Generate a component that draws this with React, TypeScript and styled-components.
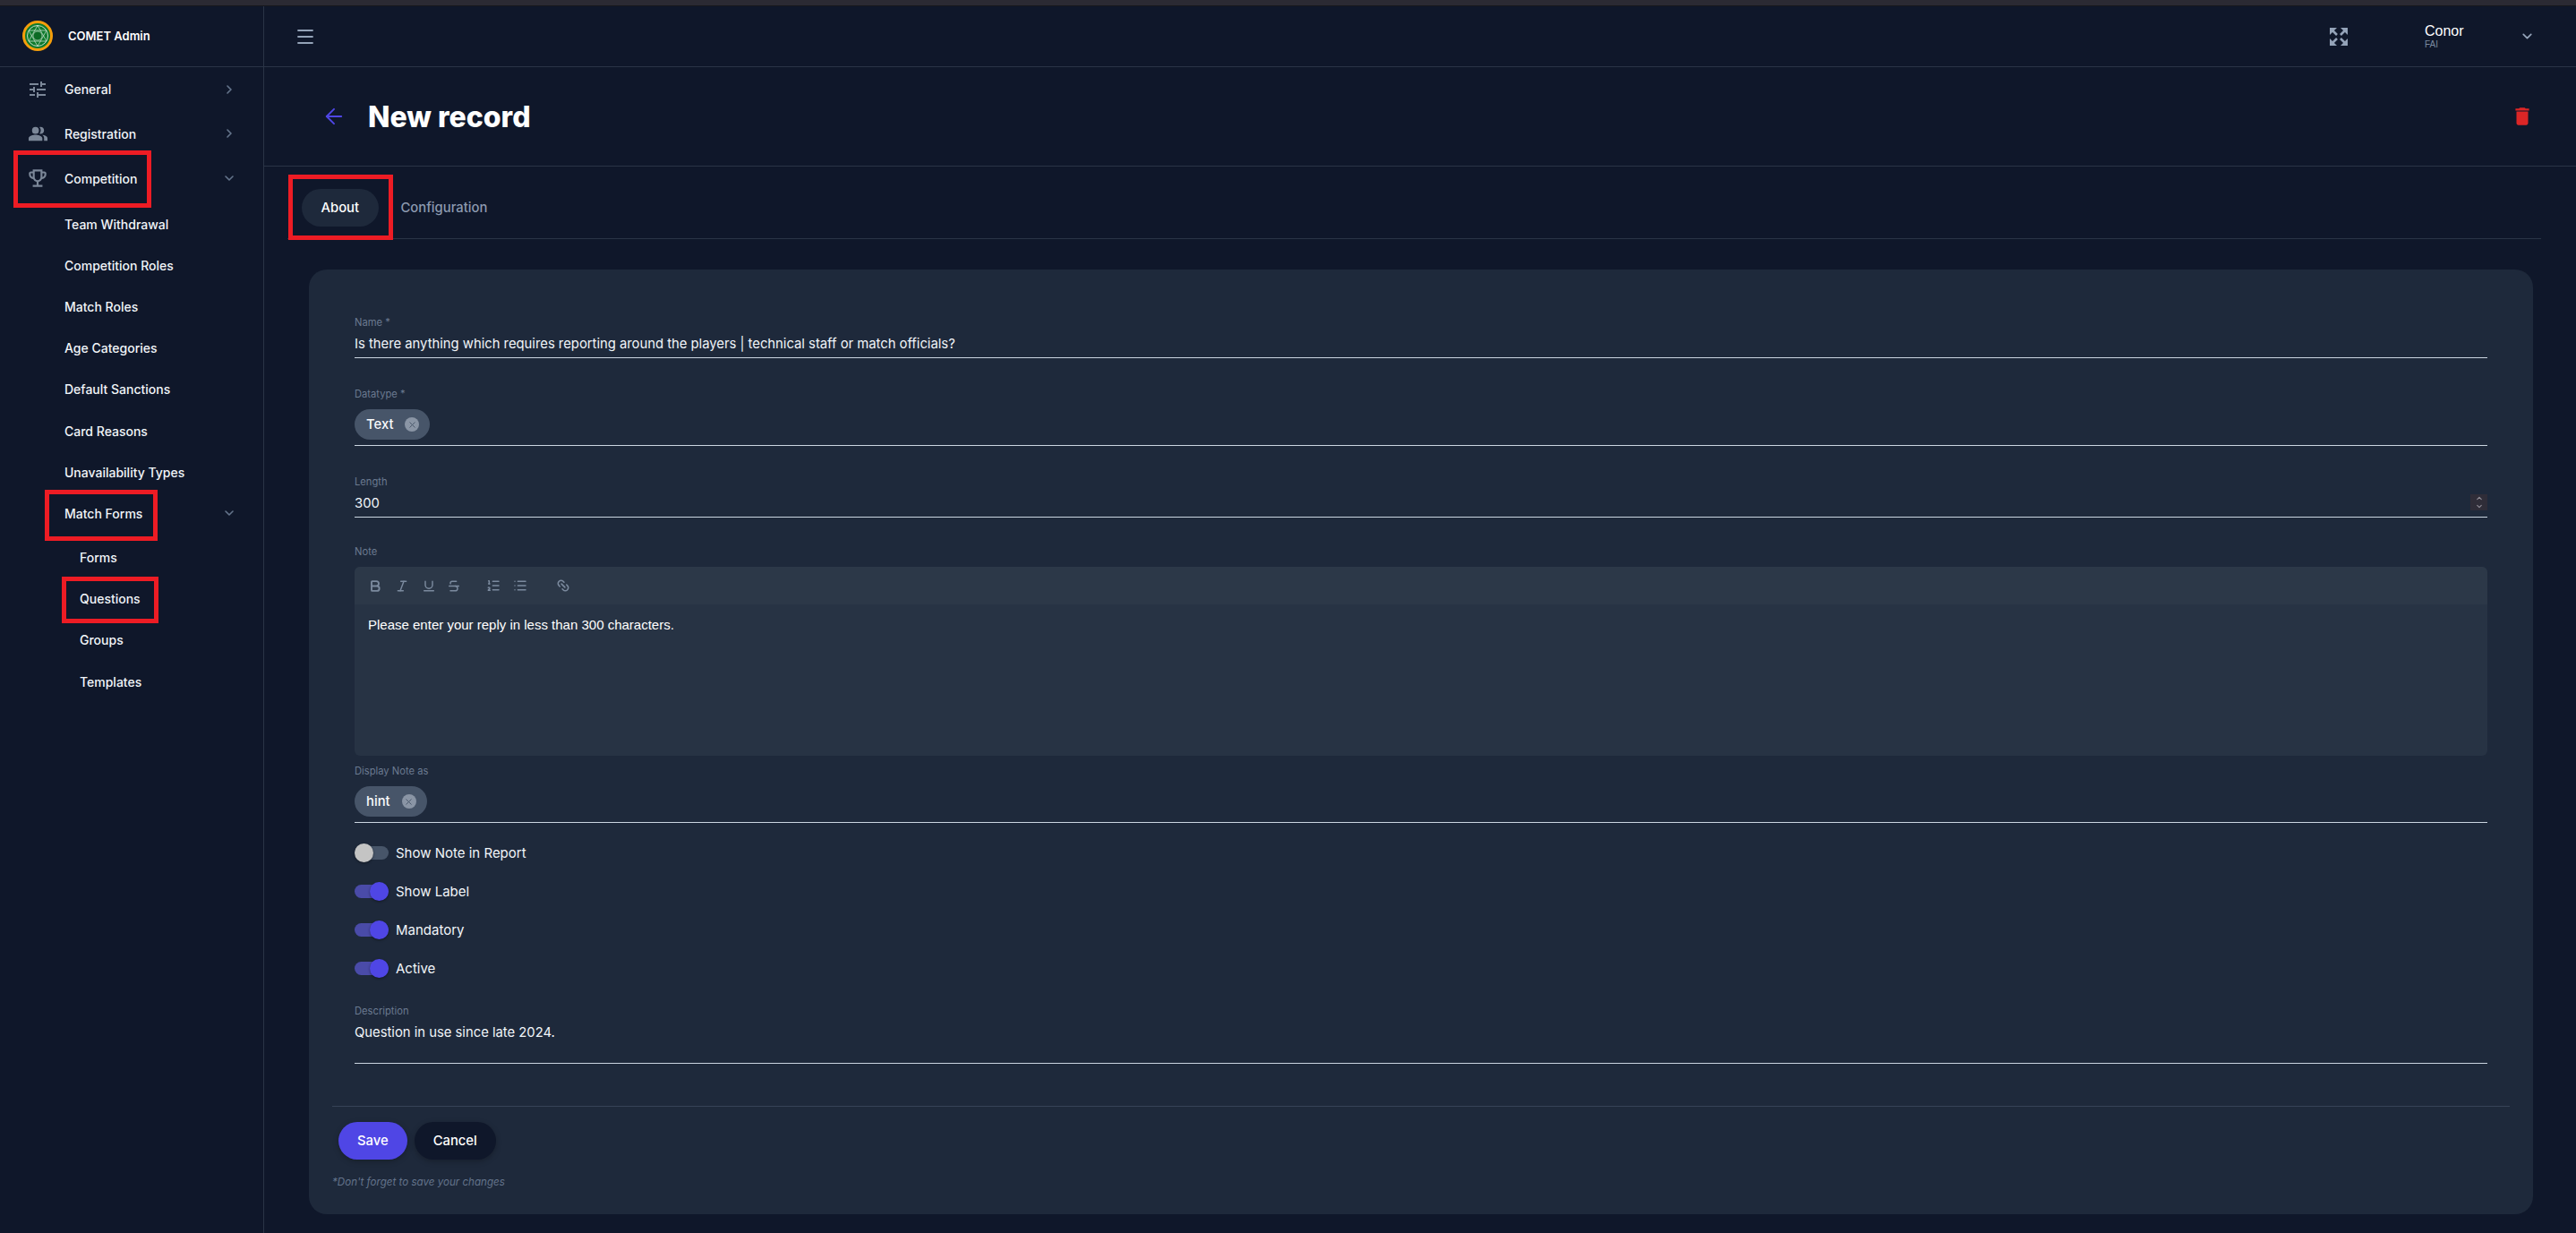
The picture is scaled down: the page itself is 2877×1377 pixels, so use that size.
import React from "react"
import styled, { createGlobalStyle } from "styled-components"
import { ChevronDown, ChevronRight, Menu, ArrowLeft, X, ChevronUp, Bold, Italic, Underline, Strikethrough, ListOrdered, List, Link2 } from "lucide-react"
import { MdOutlineEmojiEvents, MdPeopleAlt, MdTune, MdDelete } from "react-icons/md"

const GlobalStyle = createGlobalStyle`
  html, body { margin: 0; padding: 0; background: #0f172a; }
  body { font-family: Inter, "Liberation Sans", sans-serif; color: #fff; }
  * { box-sizing: border-box; }
`

const Page = styled.div`
  position: relative;
  width: 2877px;
  height: 1377px;
  overflow: hidden;
  display: flex;
  flex-direction: column;
`
const TopStripe = styled.div`
  height: 7px;
  flex: none;
  background: #2b2a33;
  border-bottom: 1px solid #17171c;
`
const Body = styled.div`
  flex: 1;
  display: flex;
  min-height: 0;
`
const Sidebar = styled.aside`
  width: 295px;
  flex: none;
  border-right: 1px solid #2a3446;
`
const Brand = styled.div`
  height: 68px;
  display: flex;
  align-items: center;
  gap: 17px;
  padding: 0 0 2px 25px;
  border-bottom: 1px solid #2a3446;
  font-size: 13px;
  font-weight: 600;
`
const NavRow = styled.div<{ $height: number; $indent: number; $gapTop?: number }>`
  height: ${(p) => p.$height}px;
  margin-top: ${(p) => p.$gapTop ?? 0}px;
  display: flex;
  align-items: center;
  padding-left: ${(p) => p.$indent}px;
  font-size: 14px;
  font-weight: 500;
  color: #f1f5f9;
`
const NavIcon = styled.span`
  width: 40px;
  margin-left: -40px;
  display: flex;
  justify-content: center;
  color: #7b8798;
  position: relative;
  left: -10px;
`
const NavLabel = styled.span`
  flex: 1;
`
const NavChevron = styled.span`
  width: 16px;
  margin-right: 30px;
  display: flex;
  color: #64748b;
`
const Main = styled.main`
  flex: 1;
  min-width: 0;
  display: flex;
  flex-direction: column;
`
const Header = styled.header`
  height: 68px;
  flex: none;
  display: flex;
  align-items: center;
  padding: 0 0 0 34px;
  border-bottom: 1px solid #2a3446;
  color: #94a3b8;
`
const HeaderSpacer = styled.div`
  flex: 1;
`
const Expand = styled.span`
  display: flex;
  margin-right: 86px;
`
const User = styled.div`
  width: 106px;
  display: flex;
  flex-direction: column;
`
const UserName = styled.span`
  font-size: 16px;
  font-family: "Liberation Sans", Arial, sans-serif;
  color: #fff;
  line-height: 18px;
`
const UserOrg = styled.span`
  font-size: 10px;
  font-family: "Liberation Sans", Arial, sans-serif;
  color: #7b8aa0;
  line-height: 12px;
`
const UserChevron = styled.span`
  display: flex;
  margin-right: 46px;
  color: #94a3b8;
`
const TitleBar = styled.div`
  height: 111px;
  flex: none;
  display: flex;
  align-items: center;
  padding: 0 47px 0 64px;
  border-bottom: 1px solid #2a3446;
`
const Title = styled.h1`
  flex: 1;
  margin: 0 0 0 24px;
  font-size: 32px;
  font-weight: 800;
  color: #fff;
`
const Tabs = styled.div`
  height: 81px;
  flex: none;
  margin: 0 39px 0 26px;
  padding: 25px 0 0 16px;
  display: flex;
  align-items: flex-start;
  gap: 25px;
  border-bottom: 1px solid #2a3446;
`
const Tab = styled.div<{ $active?: boolean }>`
  height: 42px;
  padding: 0 ${(p) => (p.$active ? 21.5 : 0)}px;
  display: flex;
  align-items: center;
  border-radius: 21px;
  font-size: 14.8px;
  font-weight: 500;
  background: ${(p) => (p.$active ? "#1e293b" : "transparent")};
  color: ${(p) => (p.$active ? "#fff" : "#8c9ab0")};
`
const Card = styled.section`
  margin: 34px 48px 0 50px;
  height: 1055px;
  background: #1e293b;
  border-radius: 20px;
  padding: 52px 26px 0 26px;
`
const Fields = styled.div`
  padding: 0 25px;
`
const Field = styled.div<{ $top: number; $height?: number; $line?: boolean }>`
  position: relative;
  margin-top: ${(p) => p.$top}px;
  min-height: ${(p) => p.$height ?? 0}px;
  border-bottom: ${(p) => (p.$line === false ? "none" : "1px solid #cbd5e1")};
`
const Label = styled.div`
  font-size: 11.2px;
  line-height: 14px;
  color: #6b7a90;
`
const Value = styled.div`
  margin-top: 7px;
  padding-bottom: 5px;
  font-size: 14.8px;
  line-height: 20px;
  color: #f1f5f9;
`
const Chip = styled.div`
  display: inline-flex;
  align-items: center;
  height: 34px;
  margin: 10px 0 6px;
  padding: 0 12px 0 13px;
  gap: 13px;
  border-radius: 17px;
  background: #475569;
  font-size: 14.8px;
  font-weight: 500;
  color: #f8fafc;
  vertical-align: top;
`
const ChipClose = styled.span`
  width: 16px;
  height: 16px;
  border-radius: 50%;
  background: #8a95a5;
  color: #475569;
  display: flex;
  align-items: center;
  justify-content: center;
`
const Spinner = styled.div`
  position: absolute;
  right: 0;
  bottom: 7px;
  width: 19px;
  height: 18px;
  background: #2f2d38;
  color: #8f8c96;
  display: flex;
  flex-direction: column;
  align-items: center;
  justify-content: center;
`
const Editor = styled.div`
  margin-top: 10px;
  height: 211px;
  border-radius: 6px;
  overflow: hidden;
  background: #273344;
`
const EditorBar = styled.div`
  height: 42px;
  padding-left: 15px;
  background: #2c3848;
  display: flex;
  align-items: center;
  color: #7b8a9e;
`
const ToolIcon = styled.span<{ $after?: number }>`
  width: 16px;
  margin-right: ${(p) => p.$after ?? 14}px;
  display: flex;
  justify-content: center;
`
const EditorBody = styled.div`
  padding: 12px 15px;
  font-family: "Liberation Sans", Arial, sans-serif;
  font-size: 15px;
  line-height: 22px;
  color: #fff;
`
const Toggles = styled.div`
  margin-top: 23px;
  display: flex;
  flex-direction: column;
  gap: 22px;
`
const ToggleRow = styled.div`
  height: 21px;
  display: flex;
  align-items: center;
  gap: 8px;
  font-size: 15px;
  color: #f1f5f9;
`
const Track = styled.span<{ $on?: boolean }>`
  position: relative;
  width: 38px;
  height: 15px;
  border-radius: 8px;
  background: ${(p) => (p.$on ? "#4a4ba8" : "#475569")};
`
const Knob = styled.span<{ $on?: boolean }>`
  position: absolute;
  top: -3px;
  left: ${(p) => (p.$on ? 17 : 0)}px;
  width: 21px;
  height: 21px;
  border-radius: 50%;
  background: ${(p) => (p.$on ? "#4f46e5" : "#c4c4c4")};
  box-shadow: 0 1px 3px rgba(0, 0, 0, 0.4);
`
const Divider = styled.div`
  margin-top: 47px;
  border-top: 1px solid #374357;
`
const Actions = styled.div`
  margin: 17px 0 0 7px;
  display: flex;
  gap: 8px;
`
const Button = styled.div<{ $primary?: boolean }>`
  height: 42px;
  padding: 0 21px;
  display: flex;
  align-items: center;
  border-radius: 21px;
  font-size: 14.8px;
  font-weight: 500;
  color: #fff;
  background: ${(p) => (p.$primary ? "#4f46e5" : "#0f172a")};
  box-shadow: 0 2px 6px rgba(0, 0, 0, 0.25);
`
const Hint = styled.div`
  margin-top: 16px;
  font-size: 11.6px;
  font-style: italic;
  line-height: 18px;
  color: #64748b;
`
// red annotation boxes drawn on top of the screenshot
const Mark = styled.div<{ $x: number; $y: number; $w: number; $h: number }>`
  position: absolute;
  left: ${(p) => p.$x}px;
  top: ${(p) => p.$y}px;
  width: ${(p) => p.$w}px;
  height: ${(p) => p.$h}px;
  border: 5px solid #ed1c24;
  pointer-events: none;
`

const Logo = () => (
  <svg width="34" height="34" viewBox="0 0 34 34">
    <circle cx="17" cy="17" r="15.5" fill="#0f7a2c" stroke="#f59e0b" strokeWidth="3" />
    <circle cx="17" cy="17" r="11.5" fill="none" stroke="#d6e8da" strokeWidth="0.9" />
    <circle cx="17" cy="17" r="5" fill="#0b6a23" stroke="#d6e8da" strokeWidth="0.6" />
    <path d="M17 5.5 L27 23 L7 23 Z M17 28.5 L7 11 L27 11 Z" fill="none" stroke="#d6e8da" strokeWidth="0.7" />
  </svg>
)

const ExpandIcon = () => (
  <svg width="20" height="20" viewBox="0 0 20 20" fill="none" stroke="#94a3b8">
    <path d="M0 8V0h8z M20 8V0h-8z M0 12v8h8z M20 12v8h-8z" fill="#94a3b8" strokeWidth="0" />
    <path d="M3 3l5 5M17 3l-5 5M3 17l5-5M17 17l-5-5" strokeWidth="2.6" />
  </svg>
)

const navItems = [
  { label: "General", icon: <MdTune size={24} />, height: 49, chevron: "right" },
  { label: "Registration", icon: <MdPeopleAlt size={23} />, height: 50, chevron: "right" },
  { label: "Competition", icon: <MdOutlineEmojiEvents size={26} />, height: 50, chevron: "down" },
  { label: "Team Withdrawal", gapTop: 3 },
  { label: "Competition Roles" },
  { label: "Match Roles" },
  { label: "Age Categories" },
  { label: "Default Sanctions" },
  { label: "Card Reasons" },
  { label: "Unavailability Types" },
  { label: "Match Forms", chevron: "down" },
  { label: "Forms", indent: 89, gapTop: 3 },
  { label: "Questions", indent: 89 },
  { label: "Groups", indent: 89 },
  { label: "Templates", indent: 89 },
]

const toggles = [
  { label: "Show Note in Report", on: false },
  { label: "Show Label", on: true },
  { label: "Mandatory", on: true },
  { label: "Active", on: true },
]

const App = () => {
  return (
    <Page>
      <GlobalStyle />
      <TopStripe />
      <Body>
        <Sidebar>
          <Brand>
            <Logo />
            COMET Admin
          </Brand>
          {navItems.map((item) => (
            <NavRow key={item.label} $height={item.height ?? 46.2} $indent={item.indent ?? 72} $gapTop={item.gapTop}>
              {item.icon && <NavIcon>{item.icon}</NavIcon>}
              <NavLabel>{item.label}</NavLabel>
              {item.chevron && (
                <NavChevron>
                  {item.chevron === "right" ? <ChevronRight size={16} strokeWidth={2.4} /> : <ChevronDown size={16} strokeWidth={2.4} />}
                </NavChevron>
              )}
            </NavRow>
          ))}
        </Sidebar>
        <Main>
          <Header>
            <Menu size={24} strokeWidth={1.8} />
            <HeaderSpacer />
            <Expand>
              <ExpandIcon />
            </Expand>
            <User>
              <UserName>Conor</UserName>
              <UserOrg>FAI</UserOrg>
            </User>
            <UserChevron>
              <ChevronDown size={17} strokeWidth={2.4} />
            </UserChevron>
          </Header>
          <TitleBar>
            <ArrowLeft size={28} strokeWidth={1.7} color="#4f46e5" />
            <Title>New record</Title>
            <MdDelete size={26} color="#dc2626" />
          </TitleBar>
          <Tabs>
            <Tab $active>About</Tab>
            <Tab>Configuration</Tab>
          </Tabs>
          <Card>
            <Fields>
              <Field $top={0}>
                <Label>Name *</Label>
                <Value>Is there anything which requires reporting around the players | technical staff or match officials?</Value>
              </Field>
              <Field $top={33}>
                <Label>Datatype *</Label>
                <Chip>
                  Text
                  <ChipClose>
                    <X size={11} strokeWidth={2} />
                  </ChipClose>
                </Chip>
              </Field>
              <Field $top={33}>
                <Label>Length</Label>
                <Value>300</Value>
                <Spinner>
                  <ChevronUp size={10} strokeWidth={3} />
                  <ChevronDown size={10} strokeWidth={3} />
                </Spinner>
              </Field>
              <Field $top={31} $line={false}>
                <Label>Note</Label>
                <Editor>
                  <EditorBar>
                    <ToolIcon><Bold size={17} strokeWidth={2.8} /></ToolIcon>
                    <ToolIcon><Italic size={17} strokeWidth={2.2} /></ToolIcon>
                    <ToolIcon $after={12}><Underline size={17} strokeWidth={2.2} /></ToolIcon>
                    <ToolIcon $after={28}><Strikethrough size={17} strokeWidth={2.2} /></ToolIcon>
                    <ToolIcon><ListOrdered size={18} strokeWidth={2.2} /></ToolIcon>
                    <ToolIcon $after={32}><List size={18} strokeWidth={2.2} /></ToolIcon>
                    <ToolIcon><Link2 size={18} strokeWidth={2.4} style={{ transform: "rotate(45deg)" }} /></ToolIcon>
                  </EditorBar>
                  <EditorBody>Please enter your reply in less than 300 characters.</EditorBody>
                </Editor>
              </Field>
              <Field $top={10}>
                <Label>Display Note as</Label>
                <Chip>
                  hint
                  <ChipClose>
                    <X size={11} strokeWidth={2} />
                  </ChipClose>
                </Chip>
              </Field>
              <Toggles>
                {toggles.map((t) => (
                  <ToggleRow key={t.label}>
                    <Track $on={t.on}>
                      <Knob $on={t.on} />
                    </Track>
                    {t.label}
                  </ToggleRow>
                ))}
              </Toggles>
              <Field $top={30} $height={66}>
                <Label>Description</Label>
                <Value>Question in use since late 2024.</Value>
              </Field>
            </Fields>
            <Divider />
            <Actions>
              <Button $primary>Save</Button>
              <Button>Cancel</Button>
            </Actions>
            <Hint>*Don't forget to save your changes</Hint>
          </Card>
        </Main>
      </Body>
      <Mark $x={15} $y={168} $w={154} $h={64} />
      <Mark $x={50} $y={547} $w={126} $h={57} />
      <Mark $x={69} $y={644} $w={108} $h={52} />
      <Mark $x={322} $y={195} $w={117} $h={73} />
    </Page>
  )
}

export default App
